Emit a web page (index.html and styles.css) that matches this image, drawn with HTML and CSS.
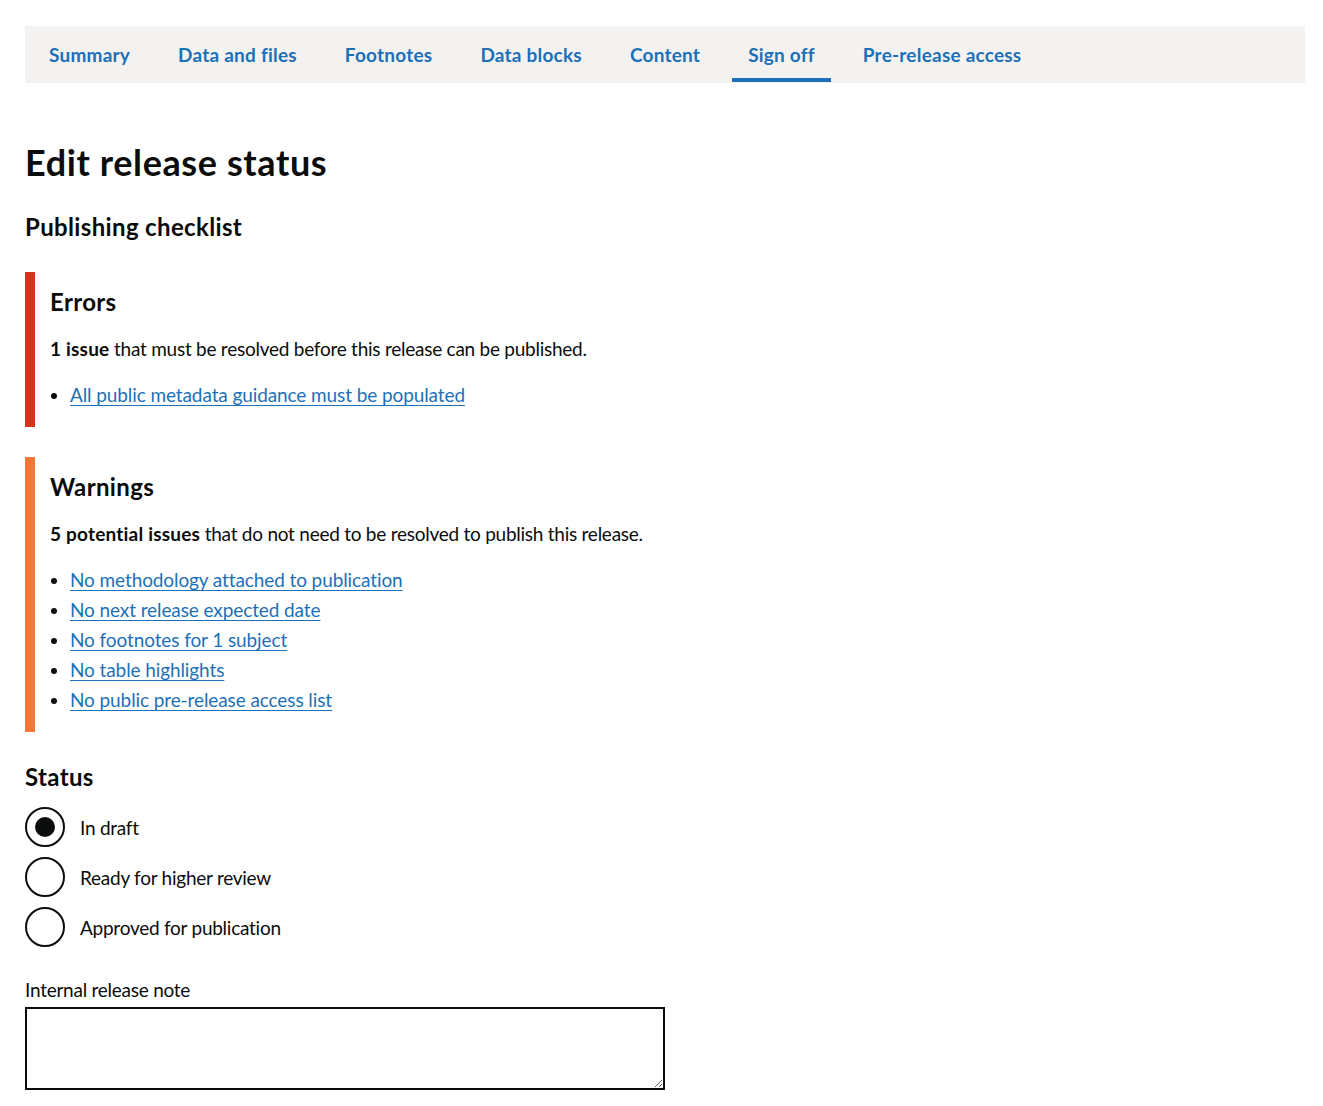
FILE: index.html
```html
<!DOCTYPE html>
<html lang="en">
<head>
<meta charset="utf-8">
<title>Edit release status</title>
<link rel="stylesheet" href="styles.css">
</head>
<body>
<div class="page">
  <nav class="tabs">
    <a class="tab" href="#">Summary</a>
    <a class="tab" href="#">Data and files</a>
    <a class="tab" href="#">Footnotes</a>
    <a class="tab" href="#">Data blocks</a>
    <a class="tab" href="#">Content</a>
    <a class="tab active" href="#">Sign off</a>
    <a class="tab" href="#">Pre-release access</a>
  </nav>

  <h1 class="h1">Edit release status</h1>
  <h2 class="h2">Publishing checklist</h2>

  <div class="panel errors">
    <h3 class="h2 panel-title">Errors</h3>
    <p class="body"><strong>1 issue</strong> that must be resolved before this release can be published.</p>
    <ul class="list">
      <li><a href="#">All public metadata guidance must be populated</a></li>
    </ul>
  </div>

  <div class="panel warnings">
    <h3 class="h2 panel-title">Warnings</h3>
    <p class="body"><strong>5 potential issues</strong> that do not need to be resolved to publish this release.</p>
    <ul class="list">
      <li><a href="#">No methodology attached to publication</a></li>
      <li><a href="#">No next release expected date</a></li>
      <li><a href="#">No footnotes for 1 subject</a></li>
      <li><a href="#">No table highlights</a></li>
      <li><a href="#">No public pre-release access list</a></li>
    </ul>
  </div>

  <h2 class="h2 status-title">Status</h2>
  <div class="radios">
    <label class="radio"><span class="circle checked"></span><span>In draft</span></label>
    <label class="radio"><span class="circle"></span><span>Ready for higher review</span></label>
    <label class="radio"><span class="circle"></span><span>Approved for publication</span></label>
  </div>

  <label class="field-label" for="note">Internal release note</label>
  <textarea id="note" class="textarea"></textarea>
</div>
</body>
</html>
```

FILE: styles.css
```css
html, body {
  margin: 0;
  padding: 0;
  background: #ffffff;
}
body {
  font-family: Lato, "Liberation Sans", sans-serif;
  color: #0b0c0c;
}
.page {
  width: 1280px;
  margin-left: 25px;
  padding-top: 26px;
}
.tabs {
  display: flex;
  gap: 16px;
  background: #f3f2f1;
  height: 57px;
  padding-left: 8px;
  box-sizing: border-box;
}
.tab {
  display: flex;
  align-items: center;
  padding: 0 16px;
  font-size: 19px;
  font-weight: 700;
  letter-spacing: 0.22px;
  color: #1d70b8;
  text-decoration: none;
  border-bottom: 4px solid transparent;
  border-top: 4px solid transparent;
  margin-bottom: 1px;
}
.tab.active {
  border-bottom-color: #1d70b8;
}
.h1 {
  font-size: 36px;
  line-height: 40px;
  font-weight: 700;
  letter-spacing: 0.6px;
  margin: 59px 0 30px;
}
.h2 {
  font-size: 24px;
  line-height: 30px;
  font-weight: 700;
  letter-spacing: 0.35px;
  margin: 0 0 30px;
}
.panel {
  border-left: 10px solid #d4351c;
  padding: 15px 0 20px 15px;
  margin-bottom: 30px;
}
.panel.warnings {
  border-left-color: #f47738;
}
.panel-title {
  margin: 0 0 19px;
}
.body {
  font-size: 19px;
  line-height: 25px;
  letter-spacing: -0.25px;
  margin: 0 0 21px;
}
.body strong {
  letter-spacing: 0.2px;
}
.list {
  margin: 0;
  padding-left: 20px;
  font-size: 19px;
  line-height: 25px;
  letter-spacing: -0.1px;
}
.list li {
  margin-bottom: 5px;
}
.list li:last-child {
  margin-bottom: 0;
}
.list a {
  color: #1d70b8;
  text-decoration: underline;
  text-decoration-thickness: 1px;
  text-underline-offset: 3px;
}
.status-title {
  margin-bottom: 15px;
}
.radios {
  display: flex;
  flex-direction: column;
  gap: 10px;
  margin-bottom: 30px;
}
.radio {
  display: flex;
  align-items: center;
  gap: 15px;
  font-size: 19px;
  line-height: 25px;
  letter-spacing: -0.25px;
}
.circle {
  width: 40px;
  height: 40px;
  box-sizing: border-box;
  border: 2px solid #0b0c0c;
  border-radius: 50%;
  display: flex;
  align-items: center;
  justify-content: center;
}
.circle.checked::after {
  content: "";
  width: 20px;
  height: 20px;
  border-radius: 50%;
  background: #0b0c0c;
}
.field-label {
  display: block;
  font-size: 19px;
  line-height: 25px;
  letter-spacing: -0.25px;
  margin-bottom: 5px;
}
.textarea {
  display: block;
  width: 640px;
  height: 83px;
  box-sizing: border-box;
  border: 2px solid #0b0c0c;
  border-radius: 0;
  margin: 0;
  padding: 5px;
  font-family: inherit;
  font-size: 19px;
}
```
